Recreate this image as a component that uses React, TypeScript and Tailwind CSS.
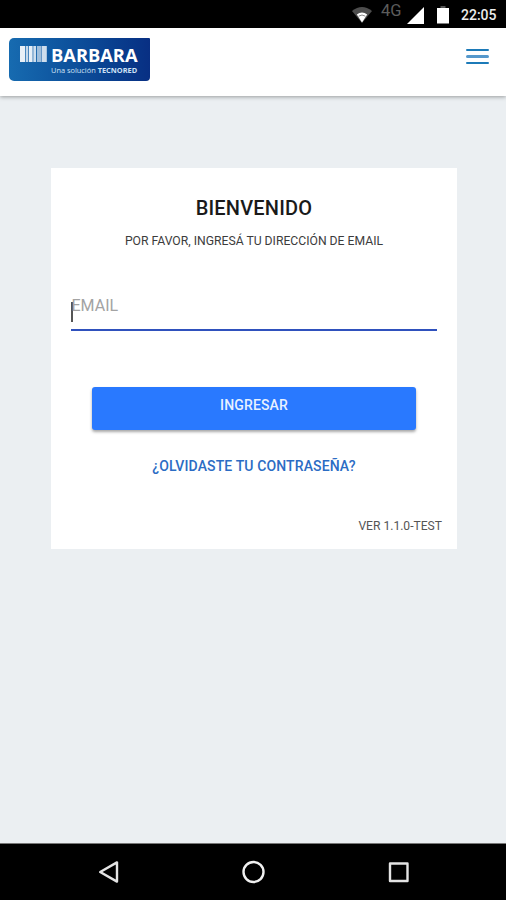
import React from "react";

const LOGO_BARS = [
    { x: 0, width: 5, opacity: 0.9 },
    { x: 5.7, width: 2.6, opacity: 0.75 },
    { x: 9, width: 3.6, opacity: 0.9 },
    { x: 13.3, width: 2.8, opacity: 0.8 },
    { x: 17, width: 4.4, opacity: 0.6 },
    { x: 21.8, width: 5, opacity: 0.8 },
];

const StatusBar = () => {
    return (
        <div className="h-7 shrink-0 bg-black flex items-center justify-end pr-2">
            <svg className="w-5 h-[17px] mr-[9px]" viewBox="0 0 20 17">
                <path d="M0 5 Q10 -3 20 5 L10 17 Z" fill="#4d4d4d" />
                <path d="M4.8 8.4 Q10 4.4 15.2 8.4 L10 16.6 Z" fill="#fff" />
                <path d="M6.6 10.2 Q10 7.8 13.4 10.2" fill="none" stroke="#555" strokeWidth="0.7" />
            </svg>
            <span className="text-[#5c5c5c] text-[16.5px] leading-none w-[21px] mb-[5px]">4G</span>
            <svg className="w-[17px] h-[17px] ml-[5px] mt-[3px]" viewBox="0 0 17 17">
                <path d="M17 0 V17 H0 Z" fill="#fff" />
            </svg>
            <svg className="w-3 h-[18px] ml-[13px] mt-0.5" viewBox="0 0 12 18">
                <path d="M3.5 0 H8.5 V2 H3.5 Z" fill="#555" />
                <path d="M0 2 H12 V17.5 H0 Z" fill="#fff" />
            </svg>
            <span className="text-[#ececec] text-[14px] font-medium leading-none w-[37px] ml-3 mt-[2px] whitespace-nowrap">22:05</span>
        </div>
    )
}

const Logo = () => {
    return (
        <div className="w-[141px] h-[43px] rounded-l-[5px] rounded-br-[4px] rounded-tr-[1px] bg-linear-to-r from-[#176bb0] to-[#082f83] flex pl-[11px] pt-[8px] font-['Open_Sans',sans-serif] text-white">
            <svg className="w-[27px] h-4 shrink-0" viewBox="0 0 27 16">
                {LOGO_BARS.map((bar) => {
                    return <rect key={bar.x} x={bar.x} y="0" width={bar.width} height="16" fill="#fff" opacity={bar.opacity} />
                })}
            </svg>
            <div className="ml-1 flex flex-col whitespace-nowrap">
                <span className="text-[18.3px] leading-[18px] font-bold">BARBARA</span>
                <span className="text-[7.4px] leading-[8px] mt-[2px] text-[#cfe2f6]">
                    Una solución <b>TECNORED</b>
                </span>
            </div>
        </div>
    )
}

const Header = () => {
    return (
        <div className="h-[68px] shrink-0 bg-white shadow-[0_1px_4px_rgba(0,0,0,0.35)] z-10 flex items-start justify-between pl-[9px] pr-[17px] pt-[10px]">
            <Logo />
            <button className="w-[23px] flex flex-col gap-1 mt-[11px]">
                <span className="h-[2.4px] w-full rounded-full bg-[#1c7ab8]"></span>
                <span className="h-[2.4px] w-full rounded-full bg-[#5598cc]"></span>
                <span className="h-[2.4px] w-full rounded-full bg-[#1c7ab8]"></span>
            </button>
        </div>
    )
}

const LoginCard = () => {
    return (
        <div className="w-[406px] h-[381px] ml-[51px] mt-[72px] bg-white flex flex-col items-center">
            <h1 className="text-[20px] leading-6 mt-[28px] tracking-[0.2px] text-[#1a1a1a] font-medium whitespace-nowrap">BIENVENIDO</h1>
            <p className="text-[12.2px] leading-4 mt-[13px] text-[#3c3c3c] whitespace-nowrap">POR FAVOR, INGRESÁ TU DIRECCIÓN DE EMAIL</p>
            <div className="w-[366px] h-9 mt-[46px] border-b-2 border-[#2f51bd] flex items-start">
                <span className="w-[1.5px] h-5 mt-[7px] bg-[#555]"></span>
                <span className="text-[16px] leading-5 mt-[1px] -ml-px text-[#a3a3a3]">EMAIL</span>
            </div>
            <button className="w-[324px] h-[43px] mt-[56px] rounded-[3px] bg-[#2979ff] shadow-[0_2px_3px_rgba(0,0,0,0.35)] text-[#e8f1ff] text-[14px] leading-[18px] tracking-[0.15px] font-medium flex justify-center pt-[9px]">
                INGRESAR
            </button>
            <a className="text-[14px] leading-[18px] mt-[27px] tracking-[0.12px] text-[#2b6cc4] font-medium whitespace-nowrap">¿OLVIDASTE TU CONTRASEÑA?</a>
            <span className="self-end mr-[15px] mt-[43px] text-[12.1px] leading-4 text-[#555] whitespace-nowrap">VER 1.1.0-TEST</span>
        </div>
    )
}

const NavigationBar = () => {
    return (
        <div className="h-[57px] shrink-0 bg-black border-t border-[#777] flex items-center pl-[98px]">
            <svg className="w-[22px] h-6" viewBox="0 0 22 24" fill="none" stroke="#e4e4e4" strokeWidth="2.4" strokeLinejoin="round">
                <path d="M2.2 12 L19 2.4 V21.6 Z" />
            </svg>
            <svg className="w-6 h-6 ml-[121px]" viewBox="0 0 24 24" fill="none" stroke="#f0f0f0" strokeWidth="2.4">
                <circle cx="12.5" cy="12" r="10" />
            </svg>
            <svg className="w-[22px] h-[22px] ml-[123px]" viewBox="0 0 22 22" fill="none" stroke="#e4e4e4" strokeWidth="2.4" strokeLinejoin="round">
                <rect x="2" y="2.5" width="17.5" height="17.5" />
            </svg>
        </div>
    )
}

const App = () => {
    return (
        <div className="w-full h-screen flex flex-col overflow-hidden bg-[#ebeff2] font-[Roboto,sans-serif]">
            <StatusBar />
            <Header />
            <div className="flex-1">
                <LoginCard />
            </div>
            <NavigationBar />
        </div>
    );
}

export default App;
